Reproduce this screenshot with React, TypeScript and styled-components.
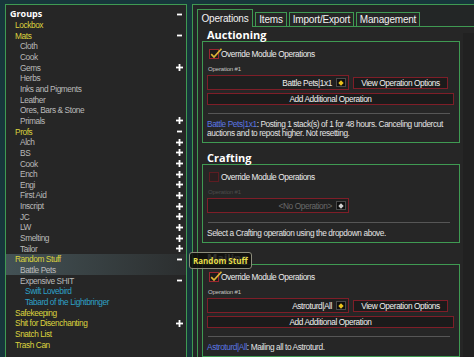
import * as React from 'react'
import styled, { createGlobalStyle } from 'styled-components'

const narrow = `"Liberation Sans", Arial, sans-serif`
const heading = `"Open Sans", "Noto Sans", sans-serif`
const green = '#3f9a52'
const red = '#7e1e28'

const GlobalStyle = createGlobalStyle`
  html, body {
    margin: 0;
    padding: 0;
    background: #17363b;
    overflow: hidden;
  }
  body {
    font-family: ${narrow};
    font-size: 8.3px;
    letter-spacing: -0.4px;
  }
`

const Screen = styled.div`
  position: relative;
  display: flex;
  width: 474px;
  height: 357px;
  padding: 4px 0 0 5px;
  box-sizing: border-box;
  overflow: hidden;
`

/* ---------- group tree ---------- */

const GroupTree = styled.div`
  flex: none;
  width: 182px;
  box-sizing: border-box;
  padding-top: 4px;
  background: #262626;
  border: 1px solid ${green};
  border-bottom: none;
`

const TreeRow = styled.div<{ $level: number; $lit?: boolean }>`
  display: flex;
  align-items: center;
  height: 10.66px;
  padding: 0 3px 0 ${p => 4 + p.$level * 5}px;
  background: ${p =>
    p.$lit
      ? 'linear-gradient(90deg, rgba(130,175,185,0.32), rgba(130,175,185,0.06))'
      : 'none'};
`

const levelColor = ['#ffffff', '#dcd43e', '#bababa', '#2ea1c6']

const TreeLabel = styled.span<{ $level: number }>`
  flex: 1;
  color: ${p => levelColor[p.$level]};
  font: ${p => (p.$level === 0 ? `bold 9px ${heading}` : `8.3px ${narrow}`)};
  letter-spacing: ${p => (p.$level === 0 ? '0' : '-0.4px')};
  line-height: 10px;
  white-space: nowrap;
`

const Toggle = styled.span`
  width: 8px;
  height: 8px;
  display: flex;
  align-items: center;
  justify-content: center;
`

const Sign = ({ open }: { open: boolean }) => (
  <svg width="7" height="7" viewBox="0 0 7 7">
    {open ? (
      <rect x="1" y="2.6" width="5" height="1.8" fill="#fff" />
    ) : (
      <>
        <rect x="0" y="2.6" width="7" height="1.8" fill="#fff" />
        <rect x="2.6" y="0" width="1.8" height="7" fill="#fff" />
      </>
    )}
  </svg>
)

type Node = [number, string, ('+' | '-')?, boolean?]

const groups: Node[] = [
  [0, 'Groups', '-'],
  [1, 'Lockbox'],
  [1, 'Mats', '-'],
  [2, 'Cloth'],
  [2, 'Cook'],
  [2, 'Gems', '+'],
  [2, 'Herbs'],
  [2, 'Inks and Pigments'],
  [2, 'Leather'],
  [2, 'Ores, Bars & Stone'],
  [2, 'Primals', '+'],
  [1, 'Profs', '-'],
  [2, 'Alch', '+'],
  [2, 'BS', '+'],
  [2, 'Cook', '+'],
  [2, 'Ench', '+'],
  [2, 'Engi', '+'],
  [2, 'First Aid', '+'],
  [2, 'Inscript', '+'],
  [2, 'JC', '+'],
  [2, 'LW', '+'],
  [2, 'Smelting', '+'],
  [2, 'Tailor', '+'],
  [1, 'Random Stuff', '-', true],
  [2, 'Battle Pets', undefined, true],
  [2, 'Expensive SHIT', '-'],
  [3, 'Swift Lovebird'],
  [3, 'Tabard of the Lightbringer'],
  [1, 'Safekeeping'],
  [1, 'Shit for Disenchanting', '+'],
  [1, 'Snatch List'],
  [1, 'Trash Can'],
]

/* ---------- right frame ---------- */

const Frame = styled.div`
  flex: 1;
  margin-left: 5px;
  padding: 4px 0 0 4px;
  display: flex;
  flex-direction: column;
  min-width: 0;
  background: #232626;
  border: 1px solid ${green};
  border-right: none;
  border-bottom: none;
`

const TabRow = styled.div`
  display: flex;
  align-items: flex-end;
  gap: 2px;
  height: 17px;
  flex: none;
`

const Tab = styled.div<{ $active?: boolean; $w: number }>`
  position: relative;
  z-index: ${p => (p.$active ? 1 : 0)};
  width: ${p => p.$w}px;
  height: ${p => (p.$active ? 18 : 14)}px;
  margin-bottom: ${p => (p.$active ? -1 : 0)}px;
  box-sizing: border-box;
  display: flex;
  align-items: center;
  justify-content: center;
  padding-bottom: ${p => (p.$active ? 1 : 0)}px;
  background: #262626;
  border: 1px solid ${green};
  border-bottom: none;
  color: #f2f2f2;
  font: 10px ${narrow};
  letter-spacing: -0.2px;
  white-space: nowrap;
`

const Content = styled.div`
  flex: 1;
  display: flex;
  min-height: 0;
  overflow: hidden;
  background: #262626;
  border-top: 1px solid ${green};
  border-left: 1px solid ${green};
`

const Scroller = styled.div`
  flex: none;
  width: 262px;
  padding-left: 4px;
  box-sizing: border-box;
`

const ScrollTrack = styled.div`
  flex: 1;
  margin: 6px 0 0 3px;
  background: #212121;
`

const SectionTitle = styled.div`
  height: 14px;
  line-height: 14px;
  margin-top: 7px;
  padding-left: 5px;
  color: #ffffff;
  font: bold 11px ${heading};
  letter-spacing: 0;
  &:first-child {
    margin-top: 0;
  }
`

const SectionBox = styled.div`
  border: 1px solid ${green};
  padding: 7px 5px 4px 4px;
`

const CheckRow = styled.div`
  display: flex;
  align-items: center;
  gap: 2px;
  height: 10px;
  margin-left: 2px;
  color: #ececec;
`

const CheckBoxBox = styled.span<{ $on: boolean }>`
  position: relative;
  flex: none;
  width: 10px;
  height: 10px;
  box-sizing: border-box;
  border: 1px solid ${p => (p.$on ? '#9a2530' : '#5e1c22')};
  background: ${p => (p.$on ? '#1c1a1a' : '#2b1f20')};
  svg {
    position: absolute;
    left: 0;
    top: -2px;
    overflow: visible;
  }
`

const OpLabel = styled.div<{ $off?: boolean }>`
  margin: 6px 0 0 1px;
  height: 8px;
  line-height: 8px;
  font-size: 6px;
  letter-spacing: -0.15px;
  color: ${p => (p.$off ? '#4c4c4c' : '#c6c6c6')};
`

const DropRow = styled.div`
  display: flex;
  align-items: center;
  gap: 4px;
  height: 15px;
  margin-top: 2px;
`

const Dropdown = styled.div<{ $off?: boolean }>`
  width: 142px;
  height: 15px;
  box-sizing: border-box;
  display: flex;
  align-items: center;
  justify-content: flex-end;
  gap: 4px;
  padding-right: 2px;
  border: 1px solid ${red};
  background: #1f1f1f;
  color: ${p => (p.$off ? '#6a6a6a' : '#eeeeee')};
`

const DropButton = styled.span`
  width: 10px;
  height: 9px;
  box-sizing: border-box;
  display: flex;
  align-items: center;
  justify-content: center;
  background: #0e0e0e;
  border: 1px solid #4a4a4a;
`

const Button = styled.div<{ $w?: number }>`
  ${p => (p.$w ? `width: ${p.$w}px;` : '')}
  height: 12px;
  box-sizing: border-box;
  display: flex;
  align-items: center;
  justify-content: center;
  border: 1px solid ${red};
  background: #1b1b1b;
  color: #f0f0f0;
  white-space: nowrap;
`

const AddButton = styled(Button)`
  margin-top: 3px;
`

const Separator = styled.div`
  height: 1px;
  margin: 8px 4px 0 1px;
  background: #565656;
  ${DropRow} + & {
    margin-top: 9px;
  }
`

const Description = styled.div`
  margin-top: 6px;
  line-height: 9px;
  color: #e4e4e4;
  white-space: nowrap;
`

const OpName = styled.span`
  color: #5b76e2;
`

const Tooltip = styled.div`
  position: absolute;
  left: 189px;
  top: 252px;
  height: 17px;
  box-sizing: border-box;
  padding: 0 3px;
  display: flex;
  align-items: center;
  background: rgba(14, 14, 10, 0.86);
  border: 1px solid #8d8d7c;
  border-radius: 3px;
  color: #e6de4a;
  font: bold 8px ${heading};
  letter-spacing: 0;
  white-space: nowrap;
`

const Check = () => (
  <svg width="12" height="11" viewBox="0 0 12 11">
    <path d="M1.2 6.2 L4 9 L11.5 0.8" stroke="#dcb436" strokeWidth="1.7" fill="none" />
  </svg>
)

const Arrow = ({ off }: { off?: boolean }) => (
  <svg width="6" height="6" viewBox="0 0 6 6">
    <path d="M3 0.3 L5.7 3 L3 5.7 L0.3 3 Z" fill={off ? '#cfcfcf' : '#e9c21c'} />
  </svg>
)

const CheckLine = ({ on }: { on: boolean }) => (
  <CheckRow>
    <CheckBoxBox $on={on}>{on && <Check />}</CheckBoxBox>
    Override Module Operations
  </CheckRow>
)

const Operation = ({ name }: { name: string }) => (
  <>
    <OpLabel>Operation #1</OpLabel>
    <DropRow>
      <Dropdown>
        {name}
        <DropButton>
          <Arrow />
        </DropButton>
      </Dropdown>
      <Button $w={95}>View Operation Options</Button>
    </DropRow>
    <AddButton>Add Additional Operation</AddButton>
    <Separator />
  </>
)

export default function App() {
  return (
    <>
      <GlobalStyle />
      <Screen>
        <GroupTree>
          {groups.map(([level, name, sign, lit], i) => (
            <TreeRow key={i} $level={level} $lit={lit}>
              <TreeLabel $level={level}>{name}</TreeLabel>
              <Toggle>{sign && <Sign open={sign === '-'} />}</Toggle>
            </TreeRow>
          ))}
        </GroupTree>

        <Frame>
          <TabRow>
            <Tab $active $w={56}>Operations</Tab>
            <Tab $w={32}>Items</Tab>
            <Tab $w={65}>Import/Export</Tab>
            <Tab $w={64}>Management</Tab>
          </TabRow>
          <Content>
            <Scroller>
              <SectionTitle>Auctioning</SectionTitle>
              <SectionBox>
                <CheckLine on />
                <Operation name="Battle Pets|1x1" />
                <Description>
                  <OpName>Battle Pets|1x1</OpName>: Posting 1 stack(s) of 1 for 48 hours. Canceling undercut
                  <br />
                  auctions and to repost higher. Not resetting.
                </Description>
              </SectionBox>

              <SectionTitle>Crafting</SectionTitle>
              <SectionBox>
                <CheckLine on={false} />
                <OpLabel $off>Operation #1</OpLabel>
                <DropRow>
                  <Dropdown $off>
                    &lt;No Operation&gt;
                    <DropButton>
                      <Arrow off />
                    </DropButton>
                  </Dropdown>
                </DropRow>
                <Separator />
                <Description>Select a Crafting operation using the dropdown above.</Description>
              </SectionBox>

              <SectionTitle>Mailing</SectionTitle>
              <SectionBox>
                <CheckLine on />
                <Operation name="Astroturd|All" />
                <Description>
                  <OpName>Astroturd|All</OpName>: Mailing all to Astroturd.
                </Description>
              </SectionBox>
            </Scroller>
            <ScrollTrack />
          </Content>
        </Frame>

        <Tooltip>Random Stuff</Tooltip>
      </Screen>
    </>
  )
}
